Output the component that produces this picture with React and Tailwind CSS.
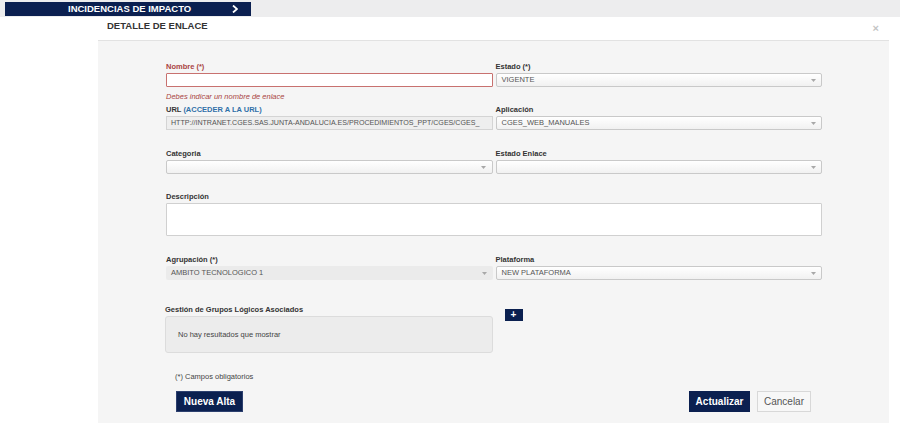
import React from 'react'

const font = { fontFamily: '"Liberation Sans", Arial, sans-serif' }

function Arrow() {
  return (
    <span className="absolute right-[2px] top-[2px] bottom-[2px] w-[12px] flex items-center justify-center">
      <svg width="5" height="3" viewBox="0 0 5 3">
        <path d="M0 0 L5 0 L2.5 3 Z" fill="#a8a8a8" />
      </svg>
    </span>
  )
}

function Select({ value, disabled }) {
  if (disabled) {
    return (
      <div className="relative h-[14px] bg-[#ebebeb] rounded-[2px] flex items-center pl-[5px] text-[7.5px] text-[#555] uppercase">
        {value}
        <Arrow />
      </div>
    )
  }
  return (
    <div className="relative h-[14px] border border-[#c9c9c9] rounded-[2px] bg-gradient-to-b from-white to-[#f1f1f1] flex items-center pl-[5px] text-[7.5px] text-[#555] uppercase">
      {value}
      <Arrow />
    </div>
  )
}

function Label({ children, className = '' }) {
  return (
    <div className={'h-[11px] text-[7.5px] font-bold leading-[10px] text-[#333] ' + className}>
      {children}
    </div>
  )
}

export default function App() {
  return (
    <div style={font} className="w-[900px] h-[433px] bg-white overflow-hidden">
      <div className="h-[17px] bg-[#ededee] pl-[5px] pt-[2px]">
        <div className="w-[246px] h-[14px] bg-[#0b2050] flex items-center text-white text-[9.5px] font-bold">
          <span className="ml-[63px]">INCIDENCIAS DE IMPACTO</span>
          <svg className="ml-[41px]" width="6" height="8" viewBox="0 0 6 8">
            <path d="M1 0.5 L5 4 L1 7.5" stroke="white" strokeWidth="1.8" fill="none" />
          </svg>
        </div>
      </div>

      <div className="ml-[98px] w-[791px] h-[23px] relative">
        <div className="absolute left-[9px] top-[2px] text-[9.5px] font-bold text-[#333]">DETALLE DE ENLACE</div>
        <div className="absolute right-[10px] top-[3px] text-[11px] text-[#c4c4c4] font-bold">×</div>
      </div>

      <div className="ml-[98px] w-[791px] h-[383px] bg-[#f5f5f5] border-t border-[#e2e2e2] pt-[21px]">
        <div className="ml-[68px] w-[656px]">
          <div className="grid grid-cols-2 gap-x-[3px]">
            <div>
              <Label className="text-[#a94442]">Nombre (*)</Label>
              <div className="h-[14px] border border-[#c8716f] bg-white rounded-[1px]" />
            </div>
            <div>
              <Label>Estado (*)</Label>
              <Select value="VIGENTE" />
            </div>
          </div>

          <div className="mt-[5px] h-[10px] text-[7.5px] italic text-[#a94442] leading-[10px]">
            Debes indicar un nombre de enlace
          </div>

          <div className="grid grid-cols-2 gap-x-[3px] mt-[3px]">
            <div>
              <Label>
                URL <span className="text-[#3070a8]">(ACCEDER A LA URL)</span>
              </Label>
              <div className="h-[14px] border border-[#d4d4d4] bg-[#eeeeee] flex items-center pl-[4px] text-[7.1px] text-[#555] whitespace-nowrap">
                HTTP://INTRANET.CGES.SAS.JUNTA-ANDALUCIA.ES/PROCEDIMIENTOS_PPT/CGES/CGES_
              </div>
            </div>
            <div>
              <Label>Aplicación</Label>
              <Select value="CGES_WEB_MANUALES" />
            </div>
          </div>

          <div className="grid grid-cols-2 gap-x-[3px] mt-[19px]">
            <div>
              <Label>Categoria</Label>
              <Select value="" />
            </div>
            <div>
              <Label>Estado Enlace</Label>
              <Select value="" />
            </div>
          </div>

          <div className="mt-[18px]">
            <Label>Descripción</Label>
            <div className="h-[33px] border border-[#d0d0d0] bg-white rounded-[1px]" />
          </div>

          <div className="grid grid-cols-2 gap-x-[3px] mt-[19px]">
            <div>
              <Label>Agrupación (*)</Label>
              <Select value="AMBITO TECNOLOGICO 1" disabled />
            </div>
            <div>
              <Label>Plataforma</Label>
              <Select value="NEW PLATAFORMA" />
            </div>
          </div>

          <div className="grid grid-cols-2 gap-x-[3px] mt-[25px]">
            <div className="-ml-[1px]">
              <Label>Gestión de Grupos Lógicos Asociados</Label>
              <div className="h-[37px] bg-[#ececec] border border-[#dcdcdc] rounded-[3px] flex items-center pl-[12px] text-[7.5px] text-[#444]">
                No hay resultados que mostrar
              </div>
            </div>
            <div className="pt-[4px] pl-[9px]">
              <div className="w-[18px] h-[12px] bg-[#0b2050] flex items-center justify-center text-white text-[10px] font-bold leading-none">
                +
              </div>
            </div>
          </div>

          <div className="ml-[9px] mt-[19px] h-[10px] text-[7.5px] text-[#444] leading-[10px]">
            (*) Campos obligatorios
          </div>

          <div className="flex items-center mt-[9px] ml-[10px] w-[635px]">
            <div className="w-[67px] h-[21px] bg-[#0b2050] border border-[#2c3f6e] text-white text-[10px] font-bold flex items-center justify-center">
              Nueva Alta
            </div>
            <div className="ml-auto w-[61px] h-[21px] bg-[#0b2050] text-white text-[10px] font-bold flex items-center justify-center">
              Actualizar
            </div>
            <div className="ml-[7px] w-[54px] h-[21px] bg-[#f7f7f7] border border-[#d8d8d8] text-[#555] text-[10px] flex items-center justify-center">
              Cancelar
            </div>
          </div>
        </div>
      </div>
    </div>
  )
}
